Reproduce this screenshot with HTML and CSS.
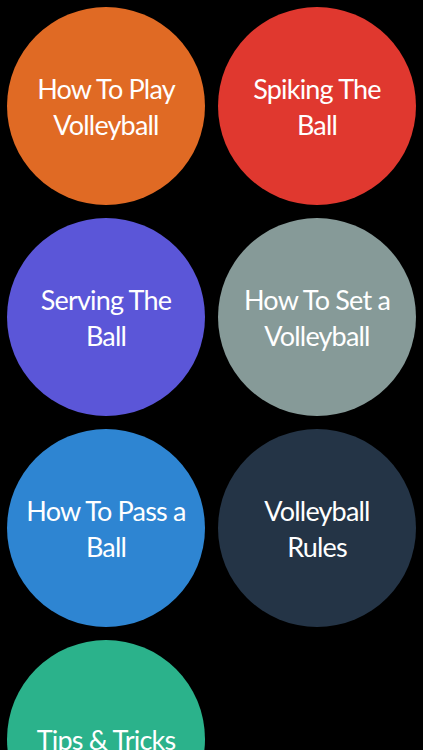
FILE: index.html
```html
<!DOCTYPE html>
<html lang="en">
<head>
    <meta charset="UTF-8">
    <meta name="viewport" content="width=device-width, initial-scale=1.0">
    <title>Volleyball Guide</title>
    <link rel="stylesheet" href="styles.css">
</head>
<body>
    <div class="grid">
        <div class="topic orange">How To Play<br>Volleyball</div>
        <div class="topic red">Spiking The<br>Ball</div>
        <div class="topic purple">Serving The<br>Ball</div>
        <div class="topic grey">How To Set a<br>Volleyball</div>
        <div class="topic blue">How To Pass a<br>Ball</div>
        <div class="topic navy">Volleyball<br>Rules</div>
        <div class="topic green">Tips &amp; Tricks</div>
    </div>
</body>
</html>
```

FILE: styles.css
```css
html, body {
	margin: 0;
	padding: 0;
	background: #000;
	height: 100%;
	overflow: hidden;
}

.grid {
	display: grid;
	grid-template-columns: 198px 198px;
	gap: 13px;
	padding: 7px;
}

.topic {
	width: 198px;
	height: 198px;
	border-radius: 50%;
	display: flex;
	align-items: center;
	justify-content: center;
	text-align: center;
	color: #fff;
	font-family: Lato, "Open Sans", sans-serif;
	font-weight: 400;
	font-size: 27px;
	line-height: 36px;
	letter-spacing: -0.8px;
	padding-top: 2px;
	box-sizing: border-box;
}

.orange { background: #e06a24; }
.red { background: #e0382f; }
.purple { background: #5b56d8; }
.grey { background: #869a98; }
.blue { background: #2e85d2; }
.navy { background: #243446; }
.green { background: #2bb28b; }
```
